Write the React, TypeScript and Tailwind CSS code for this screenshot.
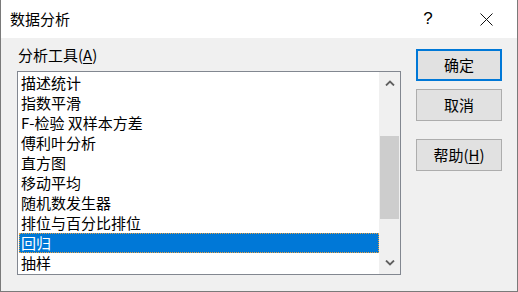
import React from 'react';

const tools = [
  '描述统计',
  '指数平滑',
  'F-检验 双样本方差',
  '傅利叶分析',
  '直方图',
  '移动平均',
  '随机数发生器',
  '排位与百分比排位',
  '回归',
  '抽样',
];

const selected = '回归';

function Chevron({ up }: { up?: boolean }) {
  return (
    <svg width="10" height="6" viewBox="0 0 10 6" className="block">
      <path
        d={up ? 'M1 5.5 L5 1.5 L9 5.5' : 'M1 0.5 L5 4.5 L9 0.5'}
        fill="none"
        stroke="#606060"
        strokeWidth="1.8"
      />
    </svg>
  );
}

function DialogButton({ children, primary }: { children: React.ReactNode; primary?: boolean }) {
  return (
    <div
      className={
        primary
          ? 'h-[32px] w-[86px] border-2 border-[#0078d7] bg-[#e1e1e1] flex items-center justify-center'
          : 'h-[32px] w-[86px] border border-[#adadad] bg-[#e1e1e1] flex items-center justify-center'
      }
    >
      {children}
    </div>
  );
}

export default function App() {
  return (
    <div
      className="w-[518px] h-[292px] bg-[#f0f0f0] border-l border-r border-b border-[#7a7a7a] flex flex-col text-[15px] text-black"
      style={{ fontFamily: '"Noto Sans CJK SC", "Noto Sans", sans-serif' }}
    >
      {/* title bar */}
      <div className="h-[38px] bg-white flex items-center pl-[9px] shrink-0">
        <span className="leading-[20px] flex-1">数据分析</span>
        <span className="w-[20px] text-center text-[17px] leading-[20px] font-light mr-[42px]" style={{ fontFamily: '"Liberation Sans", sans-serif' }}>
          ?
        </span>
        <svg width="13" height="13" viewBox="0 0 13 13" className="mr-[24px]">
          <path d="M0.5 0.5 L12.5 12.5 M12.5 0.5 L0.5 12.5" stroke="#111" strokeWidth="1" fill="none" />
        </svg>
      </div>

      {/* body */}
      <div className="flex pl-[16px] pr-[15px] gap-[15px]">
        <div className="w-[384px] pt-[7px]">
          <div className="h-[20px] leading-[20px] pl-[1px]">
            分析工具(<span className="underline underline-offset-2">A</span>)
          </div>
          <div className="mt-[6px] h-[204px] border border-[#828790] bg-white flex">
            <div className="flex-1 pt-[1px] pl-[1px]">
              {tools.map((t) => (
                <div
                  key={t}
                  className={
                    t === selected
                      ? 'h-[20px] leading-[20px] pl-[2px] bg-[#0078d7] text-white outline outline-1 outline-dotted outline-[#e8a040] -outline-offset-1'
                      : 'h-[20px] leading-[20px] pl-[2px]'
                  }
                >
                  {t}
                </div>
              ))}
            </div>
            <div className="w-[21px] bg-[#f0f0f0] flex flex-col items-center">
              <div className="h-[22px] flex items-center justify-center">
                <Chevron up />
              </div>
              <div className="mt-[42px] h-[83px] w-[19px] bg-[#cdcdcd]" />
              <div className="flex-1" />
              <div className="h-[22px] flex items-center justify-center">
                <Chevron />
              </div>
            </div>
          </div>
        </div>

        <div className="w-[86px] pt-[11px] flex flex-col">
          <DialogButton primary>确定</DialogButton>
          <div className="mt-[8px]">
            <DialogButton>取消</DialogButton>
          </div>
          <div className="mt-[18px]">
            <DialogButton>
              帮助(<span className="underline underline-offset-2">H</span>)
            </DialogButton>
          </div>
        </div>
      </div>
    </div>
  );
}
